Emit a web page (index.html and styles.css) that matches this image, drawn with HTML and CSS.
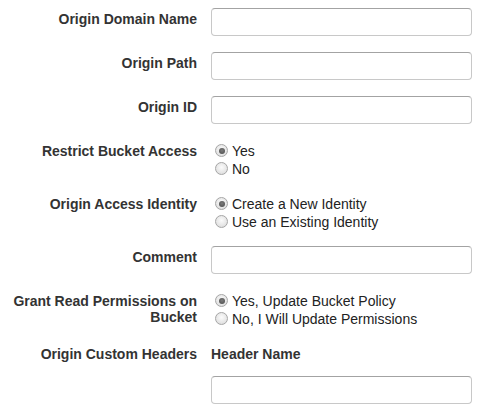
FILE: index.html
```html
<!DOCTYPE html>
<html>
<head>
<meta charset="utf-8">
<link rel="stylesheet" href="styles.css">
</head>
<body>
<form class="form">
  <div class="row">
    <label class="lbl">Origin Domain Name</label>
    <div class="ctrl"><input class="txt" type="text"></div>
  </div>
  <div class="row">
    <label class="lbl">Origin Path</label>
    <div class="ctrl"><input class="txt" type="text"></div>
  </div>
  <div class="row">
    <label class="lbl">Origin ID</label>
    <div class="ctrl"><input class="txt" type="text"></div>
  </div>
  <div class="row row-radio">
    <label class="lbl">Restrict Bucket Access</label>
    <div class="ctrl radios">
      <label class="opt"><input class="rad" type="radio" name="rba" checked>Yes</label>
      <label class="opt"><input class="rad" type="radio" name="rba">No</label>
    </div>
  </div>
  <div class="row row-radio">
    <label class="lbl">Origin Access Identity</label>
    <div class="ctrl radios">
      <label class="opt"><input class="rad" type="radio" name="oai" checked>Create a New Identity</label>
      <label class="opt"><input class="rad" type="radio" name="oai">Use an Existing Identity</label>
    </div>
  </div>
  <div class="row">
    <label class="lbl">Comment</label>
    <div class="ctrl"><input class="txt" type="text"></div>
  </div>
  <div class="row row-radio">
    <label class="lbl">Grant Read Permissions on Bucket</label>
    <div class="ctrl radios">
      <label class="opt"><input class="rad" type="radio" name="grp" checked>Yes, Update Bucket Policy</label>
      <label class="opt"><input class="rad" type="radio" name="grp">No, I Will Update Permissions</label>
    </div>
  </div>
  <div class="row row-head">
    <label class="lbl">Origin Custom Headers</label>
    <div class="ctrl head">Header Name</div>
  </div>
  <div class="row">
    <div class="lbl"></div>
    <div class="ctrl"><input class="txt" type="text"></div>
  </div>
</form>
</body>
</html>
```

FILE: styles.css
```css
html, body {
  background: #ffffff;
}
body {
  margin: 8px;
  font-family: "Liberation Sans", Arial, sans-serif;
  font-size: 14px;
  color: #333333;
}
.form {
  display: flex;
  flex-direction: column;
}
.row {
  display: grid;
  grid-template-columns: 189px 261px;
  column-gap: 14px;
  margin-bottom: 16px;
}
.row-radio {
  margin-bottom: 15px;
}
.row-head {
  margin-bottom: 14px;
}
.lbl {
  font-weight: bold;
  text-align: right;
  line-height: 16px;
  padding-top: 3px;
  color: #333333;
}
.ctrl {
  min-width: 0;
}
.txt {
  display: block;
  box-sizing: border-box;
  width: 261px;
  height: 28px;
  margin: 0;
  padding: 4px 8px;
  border: 1px solid #c8c8c8;
  border-top-color: #a3a3a3;
  border-radius: 4px;
  background: #ffffff;
  font: inherit;
}
.radios {
  display: flex;
  flex-direction: column;
  padding-top: 2px;
}
.opt {
  display: flex;
  align-items: flex-start;
  line-height: 18px;
  height: 18px;
  color: #222222;
  white-space: nowrap;
}
.rad {
  appearance: none;
  -webkit-appearance: none;
  box-sizing: border-box;
  width: 13px;
  height: 13px;
  margin: 2px 4px 0 4px;
  border: 1px solid #a6a6a6;
  border-radius: 50%;
  background: radial-gradient(circle at 50% 40%, #fbfbfb 0%, #e6e6e6 60%, #d4d4d4 100%);
  flex: none;
  position: relative;
}
.rad:checked::after {
  content: "";
  position: absolute;
  left: 2.5px;
  top: 2.5px;
  width: 6px;
  height: 6px;
  border-radius: 50%;
  background: radial-gradient(circle at 50% 40%, #7a7a7a 0%, #4a4a4a 100%);
}
.head {
  font-weight: bold;
  line-height: 16px;
  padding-top: 3px;
  color: #333333;
}
```
